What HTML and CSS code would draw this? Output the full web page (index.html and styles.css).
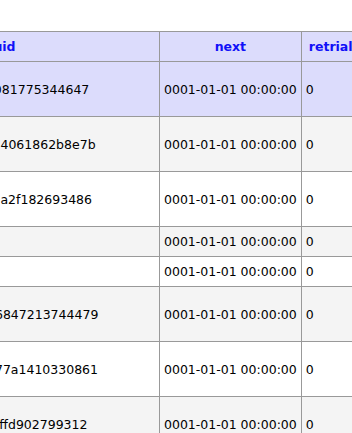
FILE: index.html
```html
<!DOCTYPE html>
<html lang="en">
<head>
<meta charset="utf-8">
<title>Jobs</title>
<link rel="stylesheet" href="styles.css">
</head>
<body>
<div class="viewport">
  <table class="jobs">
    <thead>
      <tr>
        <th class="col-id">uuid</th>
        <th>next</th>
        <th>retrials</th>
      </tr>
    </thead>
    <tbody>
      <tr class="tall hl">
        <td class="id">5b3d90c47128bd6403c081775344647</td>
        <td>0001-01-01 00:00:00</td>
        <td>0</td>
      </tr>
      <tr class="tall alt">
        <td class="id">d91f3b2058476d01b9384061862b8e7b</td>
        <td>0001-01-01 00:00:00</td>
        <td>0</td>
      </tr>
      <tr class="tall">
        <td class="id">2b7d0f5318946db20571a2f182693486</td>
        <td>0001-01-01 00:00:00</td>
        <td>0</td>
      </tr>
      <tr class="alt">
        <td class="id"></td>
        <td>0001-01-01 00:00:00</td>
        <td>0</td>
      </tr>
      <tr>
        <td class="id"></td>
        <td>0001-01-01 00:00:00</td>
        <td>0</td>
      </tr>
      <tr class="tall alt">
        <td class="id">b40d27c18593d06b2146847213744479</td>
        <td>0001-01-01 00:00:00</td>
        <td>0</td>
      </tr>
      <tr class="tall">
        <td class="id">03db8c5197d24b6019d77a1410330861</td>
        <td>0001-01-01 00:00:00</td>
        <td>0</td>
      </tr>
      <tr class="tall alt">
        <td class="id">9d20bf31c5860d4b7123ffd902799312</td>
        <td>0001-01-01 00:00:00</td>
        <td>0</td>
      </tr>
    </tbody>
  </table>
</div>
</body>
</html>
```
FILE: styles.css
```css
html, body {
  margin: 0;
  padding: 0;
  overflow: hidden;
  background: #ffffff;
}

.viewport {
  width: 352px;
  height: 433px;
  overflow: hidden;
  padding-top: 31px;
  box-sizing: border-box;
}

.jobs {
  width: max-content;
  margin-left: -160px;
  border-collapse: collapse;
  font-family: "DejaVu Sans", sans-serif;
  font-size: 12.5px;
  line-height: 15px;
  color: #000000;
}

.jobs th,
.jobs td {
  border: 1px solid #999999;
  white-space: nowrap;
  vertical-align: middle;
}

.jobs th {
  background: #dcdcfc;
  color: #1010f8;
  font-weight: bold;
  text-align: center;
  padding: 7px 7px;
}

.jobs th.col-id {
  width: 304px;
}

.jobs td {
  padding: 7px 4px;
  text-align: left;
}

.jobs tr.tall {
  height: 55px;
}

.jobs tr.alt td {
  background: #f4f4f4;
}

.jobs tr.hl td {
  background: #dcdcfc;
}
```
